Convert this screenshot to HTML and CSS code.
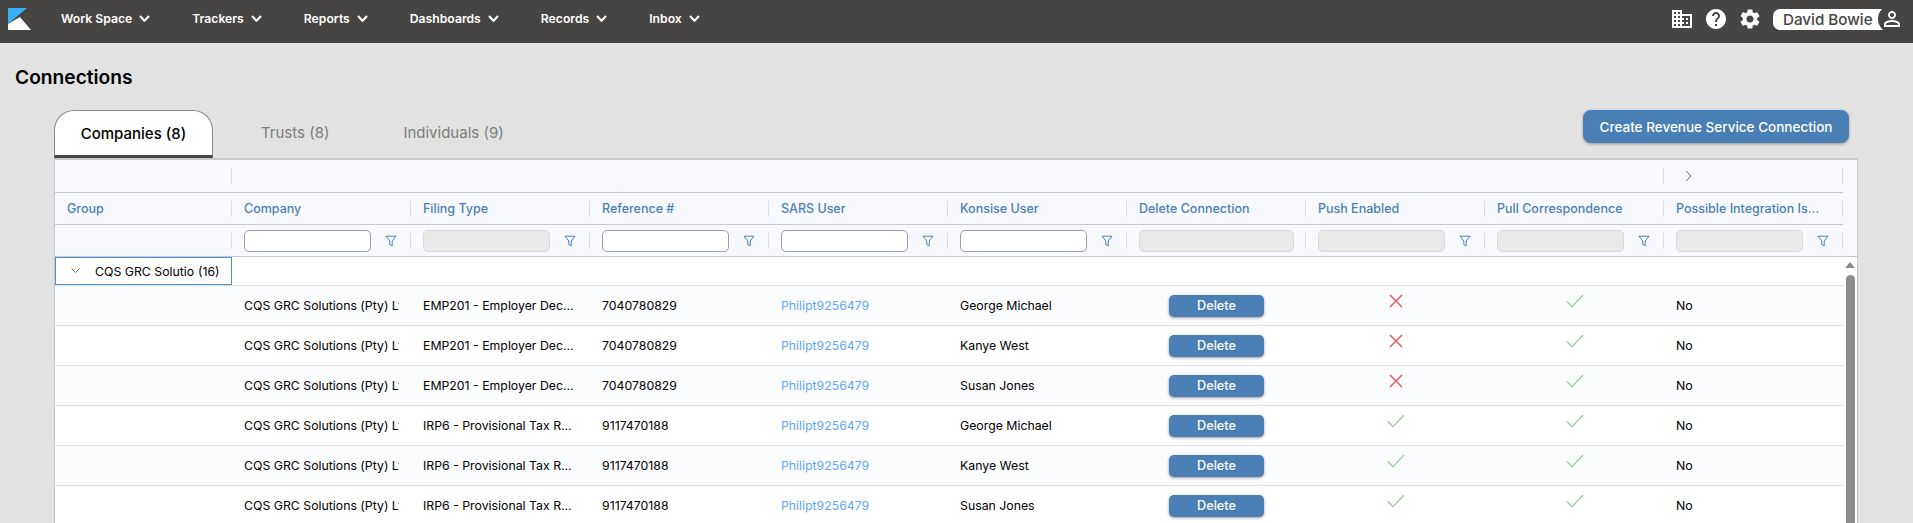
FILE: index.html
```html
<!DOCTYPE html>
<html lang="en">
<head>
<meta charset="utf-8">
<title>Connections</title>
<link rel="stylesheet" href="styles.css">
</head>
<body>
<svg class="sprite" width="0" height="0" aria-hidden="true">
  <symbol id="chev" viewBox="0 0 11 7"><path d="M1 1l4.5 4.8L10 1" fill="none" stroke="currentColor" stroke-width="2.1"/></symbol>
  <symbol id="funnel" viewBox="0 0 12 12"><path d="M1 1.2h10L7.2 6v4.8L4.8 9.6V6z" fill="none" stroke="currentColor" stroke-width="1"/></symbol>
  <symbol id="cross" viewBox="0 0 14 14"><path d="M1 1l12 12M13 1L1 13" fill="none" stroke="currentColor" stroke-width="1.6"/></symbol>
  <symbol id="tick" viewBox="0 0 18 14"><path d="M1 7.5l5 5.2L17 1" fill="none" stroke="currentColor" stroke-width="1.6"/></symbol>
</svg>

<header class="topbar">
  <svg class="logo" viewBox="0 0 23 22" width="23" height="22"><path d="M1 0h18L0 16V1q0-1 1-1z" fill="#38b0f5"/><path d="M0 16L12 9l11 13H1q-1 0-1-1z" fill="#fff"/></svg>
  <nav class="nav">
    <a class="nav-item">Work Space <svg class="nav-chev"><use href="#chev"/></svg></a>
    <a class="nav-item">Trackers <svg class="nav-chev"><use href="#chev"/></svg></a>
    <a class="nav-item">Reports <svg class="nav-chev"><use href="#chev"/></svg></a>
    <a class="nav-item">Dashboards <svg class="nav-chev"><use href="#chev"/></svg></a>
    <a class="nav-item">Records <svg class="nav-chev"><use href="#chev"/></svg></a>
    <a class="nav-item">Inbox <svg class="nav-chev"><use href="#chev"/></svg></a>
  </nav>
  <div class="top-tools">
    <svg class="tool" viewBox="0 0 24 24"><path d="M12 7V3H2v18h20V7H12zM6 19H4v-2h2v2zm0-4H4v-2h2v2zm0-4H4V9h2v2zm0-4H4V5h2v2zm4 12H8v-2h2v2zm0-4H8v-2h2v2zm0-4H8V9h2v2zm0-4H8V5h2v2zm10 12h-8v-2h2v-2h-2v-2h2v-2h-2V9h8v10zm-2-8h-2v2h2v-2zm0 4h-2v2h2v-2z"/></svg>
    <svg class="tool" viewBox="0 0 24 24"><path d="M12 2C6.48 2 2 6.48 2 12s4.48 10 10 10 10-4.48 10-10S17.52 2 12 2zm1 17h-2v-2h2v2zm2.07-7.75l-.9.92C13.45 12.9 13 13.5 13 15h-2v-.5c0-1.1.45-2.1 1.17-2.83l1.24-1.26c.37-.36.59-.86.59-1.41 0-1.1-.9-2-2-2s-2 .9-2 2H8c0-2.21 1.79-4 4-4s4 1.79 4 4c0 .88-.36 1.68-.93 2.25z"/></svg>
    <svg class="tool" viewBox="0 0 24 24"><path d="M19.14 12.94c.04-.3.06-.61.06-.94 0-.32-.02-.64-.07-.94l2.03-1.58c.18-.14.23-.41.12-.61l-1.92-3.32c-.12-.22-.37-.29-.59-.22l-2.39.96c-.5-.38-1.03-.7-1.62-.94l-.36-2.54c-.04-.24-.24-.41-.48-.41h-3.84c-.24 0-.43.17-.47.41l-.36 2.54c-.59.24-1.13.57-1.62.94l-2.39-.96c-.22-.08-.47 0-.59.22L2.74 8.87c-.12.21-.08.47.12.61l2.03 1.58c-.05.3-.09.63-.09.94s.02.64.07.94l-2.03 1.58c-.18.14-.23.41-.12.61l1.92 3.32c.12.22.37.29.59.22l2.39-.96c.5.38 1.03.7 1.62.94l.36 2.54c.05.24.24.41.48.41h3.84c.24 0 .44-.17.47-.41l.36-2.54c.59-.24 1.13-.56 1.62-.94l2.39.96c.22.08.47 0 .59-.22l1.92-3.32c.12-.22.07-.47-.12-.61l-2.01-1.58zM12 15.6c-1.98 0-3.6-1.62-3.6-3.6s1.62-3.6 3.6-3.6 3.6 1.62 3.6 3.6-1.62 3.6-3.6 3.6z"/></svg>
    <div class="user">
      <span class="user-name">David Bowie</span>
      <span class="avatar"><svg class="avatar-icon" viewBox="0 0 24 24"><path d="M12 5.9c1.16 0 2.1.94 2.1 2.1s-.94 2.1-2.1 2.1S9.9 9.16 9.9 8s.94-2.1 2.1-2.1m0 9c2.97 0 6.1 1.46 6.1 2.1v1.1H5.9V17c0-.64 3.13-2.1 6.1-2.1M12 4C9.79 4 8 5.79 8 8s1.79 4 4 4 4-1.79 4-4-1.79-4-4-4zm0 9c-2.67 0-8 1.34-8 4v3h16v-3c0-2.66-5.33-4-8-4z"/></svg></span>
    </div>
  </div>
</header>

<main class="page">
  <h1 class="title">Connections</h1>
  <div class="tabs-row">
    <div class="tabs">
      <a class="tab tab-active">Companies (8)</a>
      <a class="tab">Trusts (8)</a>
      <a class="tab">Individuals (9)</a>
    </div>
    <button class="btn-create">Create Revenue Service Connection</button>
  </div>

  <section class="table">
    <div class="table-head">
      <div class="head-row band-row">
        <div class="cell sep"></div>
        <div class="cell sep span-8"></div>
        <div class="cell sep band-next"><svg class="band-chev" viewBox="0 0 7 12"><path d="M1 1l5 5-5 5" fill="none" stroke="currentColor" stroke-width="1"/></svg></div>
      </div>
      <div class="head-row title-row">
        <div class="cell sep">Group</div>
        <div class="cell sep">Company</div>
        <div class="cell sep">Filing Type</div>
        <div class="cell sep">Reference #</div>
        <div class="cell sep">SARS User</div>
        <div class="cell sep">Konsise User</div>
        <div class="cell sep">Delete Connection</div>
        <div class="cell sep">Push Enabled</div>
        <div class="cell sep">Pull Correspondence</div>
        <div class="cell sep"><span class="clip-head">Possible Integration Issues</span></div>
      </div>
      <div class="head-row filter-row">
        <div class="cell sep"></div>
        <div class="cell sep"><input class="filter" type="text"><svg class="funnel"><use href="#funnel"/></svg></div>
        <div class="cell sep"><input class="filter" type="text" disabled><svg class="funnel"><use href="#funnel"/></svg></div>
        <div class="cell sep"><input class="filter" type="text"><svg class="funnel"><use href="#funnel"/></svg></div>
        <div class="cell sep"><input class="filter" type="text"><svg class="funnel"><use href="#funnel"/></svg></div>
        <div class="cell sep"><input class="filter" type="text"><svg class="funnel"><use href="#funnel"/></svg></div>
        <div class="cell sep"><input class="filter filter-wide" type="text" disabled></div>
        <div class="cell sep"><input class="filter" type="text" disabled><svg class="funnel"><use href="#funnel"/></svg></div>
        <div class="cell sep"><input class="filter" type="text" disabled><svg class="funnel"><use href="#funnel"/></svg></div>
        <div class="cell sep"><input class="filter" type="text" disabled><svg class="funnel"><use href="#funnel"/></svg></div>
      </div>
    </div>

    <div class="table-body">
      <div class="rows">
        <div class="group-row">
          <div class="group-cell">
            <svg class="group-chev" viewBox="0 0 9 6"><path d="M.5.5l4 4 4-4" fill="none" stroke="currentColor" stroke-width="1"/></svg>
            <span class="group-name">CQS GRC Solutions (Pty) Ltd</span>
            <span class="group-count">(16)</span>
          </div>
        </div>

        <div class="data-row">
          <div class="cell"></div>
          <div class="cell"><span class="clip">CQS GRC Solutions (Pty) Ltd</span></div>
          <div class="cell"><span class="clip-ellipsis">EMP201 - Employer Declaration</span></div>
          <div class="cell">7040780829</div>
          <div class="cell"><a class="link">Philipt9256479</a></div>
          <div class="cell">George Michael</div>
          <div class="cell center"><button class="btn-delete">Delete</button></div>
          <div class="cell center mark"><svg class="cross"><use href="#cross"/></svg></div>
          <div class="cell center mark"><svg class="tick"><use href="#tick"/></svg></div>
          <div class="cell">No</div>
        </div>
        <div class="data-row">
          <div class="cell"></div>
          <div class="cell"><span class="clip">CQS GRC Solutions (Pty) Ltd</span></div>
          <div class="cell"><span class="clip-ellipsis">EMP201 - Employer Declaration</span></div>
          <div class="cell">7040780829</div>
          <div class="cell"><a class="link">Philipt9256479</a></div>
          <div class="cell">Kanye West</div>
          <div class="cell center"><button class="btn-delete">Delete</button></div>
          <div class="cell center mark"><svg class="cross"><use href="#cross"/></svg></div>
          <div class="cell center mark"><svg class="tick"><use href="#tick"/></svg></div>
          <div class="cell">No</div>
        </div>
        <div class="data-row">
          <div class="cell"></div>
          <div class="cell"><span class="clip">CQS GRC Solutions (Pty) Ltd</span></div>
          <div class="cell"><span class="clip-ellipsis">EMP201 - Employer Declaration</span></div>
          <div class="cell">7040780829</div>
          <div class="cell"><a class="link">Philipt9256479</a></div>
          <div class="cell">Susan Jones</div>
          <div class="cell center"><button class="btn-delete">Delete</button></div>
          <div class="cell center mark"><svg class="cross"><use href="#cross"/></svg></div>
          <div class="cell center mark"><svg class="tick"><use href="#tick"/></svg></div>
          <div class="cell">No</div>
        </div>
        <div class="data-row">
          <div class="cell"></div>
          <div class="cell"><span class="clip">CQS GRC Solutions (Pty) Ltd</span></div>
          <div class="cell"><span class="clip-ellipsis">IRP6 - Provisional Tax Return</span></div>
          <div class="cell">9117470188</div>
          <div class="cell"><a class="link">Philipt9256479</a></div>
          <div class="cell">George Michael</div>
          <div class="cell center"><button class="btn-delete">Delete</button></div>
          <div class="cell center mark"><svg class="tick"><use href="#tick"/></svg></div>
          <div class="cell center mark"><svg class="tick"><use href="#tick"/></svg></div>
          <div class="cell">No</div>
        </div>
        <div class="data-row">
          <div class="cell"></div>
          <div class="cell"><span class="clip">CQS GRC Solutions (Pty) Ltd</span></div>
          <div class="cell"><span class="clip-ellipsis">IRP6 - Provisional Tax Return</span></div>
          <div class="cell">9117470188</div>
          <div class="cell"><a class="link">Philipt9256479</a></div>
          <div class="cell">Kanye West</div>
          <div class="cell center"><button class="btn-delete">Delete</button></div>
          <div class="cell center mark"><svg class="tick"><use href="#tick"/></svg></div>
          <div class="cell center mark"><svg class="tick"><use href="#tick"/></svg></div>
          <div class="cell">No</div>
        </div>
        <div class="data-row">
          <div class="cell"></div>
          <div class="cell"><span class="clip">CQS GRC Solutions (Pty) Ltd</span></div>
          <div class="cell"><span class="clip-ellipsis">IRP6 - Provisional Tax Return</span></div>
          <div class="cell">9117470188</div>
          <div class="cell"><a class="link">Philipt9256479</a></div>
          <div class="cell">Susan Jones</div>
          <div class="cell center"><button class="btn-delete">Delete</button></div>
          <div class="cell center mark"><svg class="tick"><use href="#tick"/></svg></div>
          <div class="cell center mark"><svg class="tick"><use href="#tick"/></svg></div>
          <div class="cell">No</div>
        </div>
      </div>
      <div class="scrollbar">
        <span class="scroll-up"></span>
        <span class="scroll-thumb"></span>
      </div>
    </div>
  </section>
</main>
</body>
</html>
```

FILE: styles.css
```css
* { box-sizing: border-box; }

html, body { height: 100%; }

body {
  margin: 0;
  height: 100vh;
  overflow: hidden;
  background: #e2e2e2;
  color: #000;
  font-family: Inter, "Liberation Sans", sans-serif;
  font-size: 12.3px;
}

.sprite { display: block; }

/* top bar */
.topbar {
  display: flex;
  align-items: center;
  height: 43px;
  padding-left: 8px;
  background: #474543;
  color: #fff;
}

.logo { flex: none; margin-top: -5px; }

.nav {
  display: flex;
  gap: 42px;
  margin-left: 30px;
  margin-top: -7px;
}

.nav-item {
  display: flex;
  align-items: center;
  gap: 7px;
  font-size: 12.2px;
  font-weight: 600;
  white-space: nowrap;
}

.nav-chev { width: 11px; height: 7px; }

.top-tools {
  display: flex;
  align-items: center;
  margin-left: auto;
  margin-top: -5px;
  padding-right: 7px;
}

.tool {
  width: 24px;
  height: 24px;
  margin-right: 10px;
  fill: #fff;
}

.user { display: flex; align-items: center; margin-left: 1px; }

.user-name {
  display: block;
  width: 118px;
  height: 21px;
  padding-left: 10px;
  border-radius: 7px;
  background: #fff;
  color: #474543;
  font-size: 15.2px;
  font-weight: 500;
  line-height: 21px;
}

.avatar {
  display: flex;
  align-items: center;
  justify-content: center;
  width: 28px;
  height: 28px;
  margin-left: -13px;
  border-radius: 50%;
  background: #474543;
}

.avatar-icon { width: 24px; height: 24px; fill: #fff; }

/* page head */
.title {
  margin: 0;
  padding: 22px 0 0 15px;
  font-size: 19.2px;
  font-weight: 600;
  line-height: 24px;
}

.tabs-row {
  display: flex;
  justify-content: space-between;
  align-items: flex-start;
  height: 48px;
  margin: 21px 64px 0 54px;
}

.tabs { display: flex; gap: 22px; }

.tab {
  display: block;
  height: 48px;
  padding: 0 26px;
  color: #7c7c7c;
  font-size: 15px;
  line-height: 46px;
}

.tab-active {
  width: 159px;
  padding: 0;
  border: 1px solid #8a8a8a;
  border-bottom: 3px solid #474543;
  border-radius: 20px 20px 0 0;
  background: #fff;
  color: #000;
  font-weight: 500;
  text-align: center;
}

.btn-create {
  width: 266px;
  height: 33px;
  border: 0;
  border-radius: 8px;
  background: #4a7fb5;
  box-shadow: 0 1px 3px rgba(0, 0, 0, .35);
  color: #fff;
  font: 500 13.5px Inter, "Liberation Sans", sans-serif;
}

/* table */
.table {
  width: 1804px;
  margin-left: 54px;
  border: 1px solid #c8c8c8;
  border-top-width: 2px;
  background: #fff;
}

.table-head {
  border-bottom: 1px solid #c8c8c8;
  background: #f8f9fe;
}

.head-row,
.data-row {
  display: grid;
  grid-template-columns: 177px repeat(9, 179px);
  width: 1788px;
}

.cell {
  display: flex;
  align-items: center;
  min-width: 0;
  padding-left: 12px;
  white-space: nowrap;
}

.sep {
  background: linear-gradient(#d9dce2, #d9dce2) right center / 1px 16px no-repeat;
}

.band-row {
  grid-template-columns: 177px 1432px 179px;
  height: 33px;
  border-bottom: 1px solid #c8c8c8;
}

.band-next { color: #777; padding-left: 21px; }

.band-chev { width: 7px; height: 12px; }

.title-row {
  height: 32px;
  border-bottom: 1px solid #c8c8c8;
  color: #4a7fb5;
  font-size: 12.5px;
  font-weight: 500;
}

.filter-row { height: 31px; }

.filter {
  flex: none;
  width: 127px;
  height: 22px;
  padding: 0;
  border: 1px solid #98a2a8;
  border-radius: 5px;
  background: #fff;
}

.filter:disabled {
  border-color: #d8d8d8;
  background: #e9e9e9;
}

.filter-wide { width: 155px; }

.funnel {
  flex: none;
  width: 12px;
  height: 12px;
  margin-left: 14px;
  color: #4a7fb5;
}

.clip-ellipsis {
  display: block;
  width: 153px;
  overflow: hidden;
  text-overflow: ellipsis;
}

.clip-head {
  display: block;
  width: 146px;
  overflow: hidden;
  text-overflow: ellipsis;
}

.clip {
  display: block;
  width: 155px;
  overflow: hidden;
}

.table-body { display: flex; }

.rows { flex: none; width: 1788px; }

.group-row {
  height: 29px;
  border-bottom: 1px solid #dcdcdc;
}

.group-cell {
  display: flex;
  align-items: center;
  width: 177px;
  height: 28px;
  padding-left: 15px;
  border: 1px solid #4a90d9;
  white-space: nowrap;
}

.group-chev { flex: none; width: 9px; height: 6px; color: #777; }

.group-name {
  display: block;
  width: 100px;
  margin-left: 15px;
  overflow: hidden;
}

.group-count { margin-left: 3px; }

.data-row {
  height: 40px;
  border-bottom: 1px solid #dcdcdc;
  background: #fff;
}

.data-row:nth-child(even) { background: #fbfcfe; }

.center { justify-content: center; padding-left: 0; }

.mark { padding-bottom: 9px; }

.link { color: #65a5f5; }

.btn-delete {
  width: 95px;
  height: 22px;
  padding: 0;
  border: 0;
  border-radius: 5px;
  background: #4a7fb5;
  box-shadow: 0 1px 3px rgba(0, 0, 0, .4);
  color: #fff;
  font: 500 12.7px Inter, "Liberation Sans", sans-serif;
}

.cross { width: 14px; height: 14px; color: #e9625f; }

.tick { width: 18px; height: 14px; color: #a3d3a0; }

.scrollbar {
  display: flex;
  flex-direction: column;
  align-items: center;
  width: 14px;
  padding-top: 5px;
  background: #fff;
}

.scroll-up {
  width: 0;
  height: 0;
  border-left: 5px solid transparent;
  border-right: 5px solid transparent;
  border-bottom: 6px solid #8c8c8c;
}

.scroll-thumb {
  width: 9px;
  height: 300px;
  margin-top: 7px;
  border-radius: 5px;
  background: #8c8c8c;
}
```
